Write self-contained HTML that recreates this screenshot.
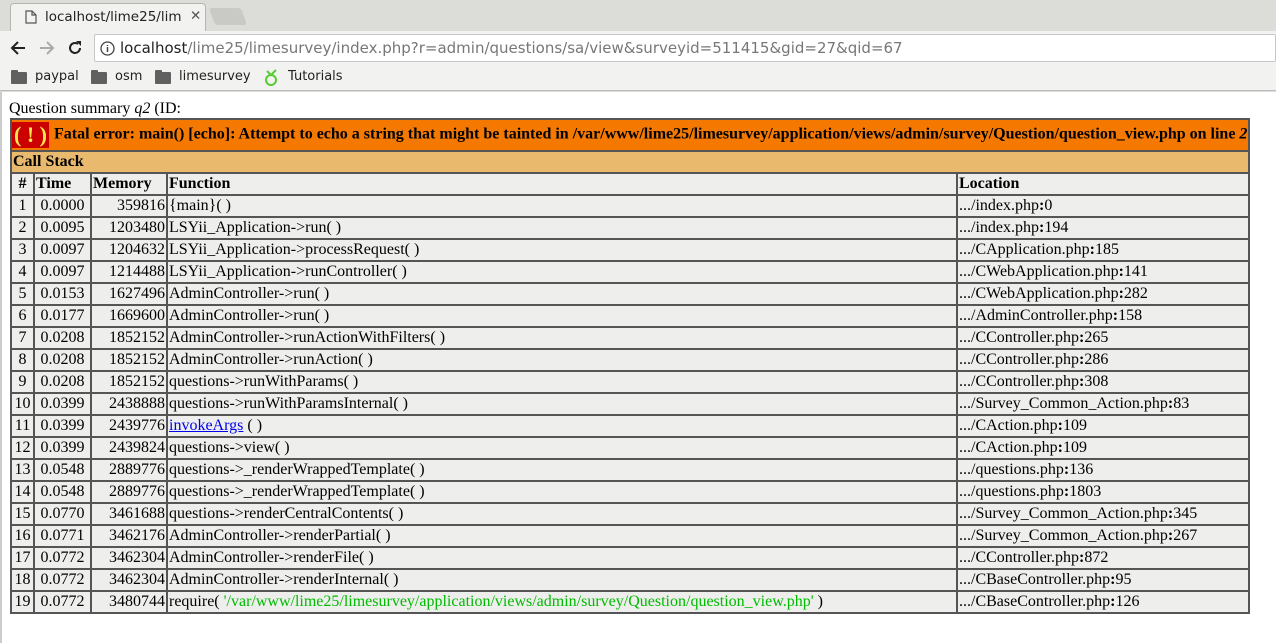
<!DOCTYPE html>
<html><head><meta charset="utf-8"><style>
*{box-sizing:border-box}
body{margin:0;width:1276px;height:643px;overflow:hidden;background:#fff;font-family:"Liberation Serif",serif;font-size:16px;position:relative}
.chrome{position:absolute;left:0;top:0;width:1276px;height:92px;background:#dcdcd9;font-family:"DejaVu Sans","Liberation Sans",sans-serif}
.tab{position:absolute;left:10px;top:3px;width:196px;height:28px;background:#f2f2f0;border:1px solid #b5b5b2;border-bottom:none;border-radius:4px 4px 0 0;font-size:13.5px;color:#222}
.tab2{position:absolute;left:212px;top:8px;width:32px;height:17px;background:#c9c9c6;border-radius:3px;transform:skewX(20deg)}
.toolbar{position:absolute;left:0;top:31px;width:1276px;height:34px;background:#f2f2f0}
.url{position:absolute;left:94px;top:34px;width:1182px;height:28px;background:#fff;border:1px solid #c8c8c8;border-radius:2px;font-size:15px;line-height:26px;padding-left:25px;color:#777}
.url b{font-weight:normal;color:#222}
.bm{position:absolute;top:65px;height:26px;background:#f2f2f0;width:1276px;left:0;border-bottom:1px solid #bbb}
.bm span{position:absolute;top:4px;font-size:13px;color:#222}
.folder{position:absolute;top:7px;width:16px;height:12px;background:#606060;border-radius:1px}
.folder:before{content:"";position:absolute;left:0;top:-2px;width:7px;height:3px;background:#606060;border-radius:1px 1px 0 0}
.content{position:absolute;left:0;top:92px;width:1276px;height:551px;border-left:2px solid #ccc}
table{position:absolute;left:10px;top:118px;border-collapse:collapse;width:1240px}
td,th{border:2px solid #555;padding:0 1px;height:22px;line-height:18px;background:#eeeeec;font-weight:normal;text-align:left;white-space:nowrap}
th{font-weight:bold}
.r{text-align:right}.c{text-align:center}
</style></head><body>
<div class="chrome">
 <div class="tab"><svg style="position:absolute;left:14px;top:6px" width="12" height="14"><path d="M1 1h6l4 4v8H1z M7 1v4h4" fill="none" stroke="#555" stroke-width="1.2"/></svg><span style="position:absolute;left:34px;top:5px">localhost/lime25/lim</span><span style="position:absolute;left:179px;top:4px;color:#555">✕</span></div>
 <div class="tab2"></div>
 <div class="toolbar">
  <svg style="position:absolute;left:10px;top:10px" width="16" height="14"><path d="M15 7H2M8 1L2 7l6 6" fill="none" stroke="#222" stroke-width="2"/></svg>
  <svg style="position:absolute;left:39px;top:10px" width="16" height="14"><path d="M1 7h13M8 1l6 6-6 6" fill="none" stroke="#aaa" stroke-width="2"/></svg>
  <svg style="position:absolute;left:66px;top:8px" width="18" height="18"><path d="M14 9a5 5 0 1 1-2-4" fill="none" stroke="#222" stroke-width="2"/><path d="M10 2h5v5z" fill="#222"/></svg>
 </div>
 <div class="url"><svg style="position:absolute;left:5px;top:6px" width="15" height="15"><circle cx="7.5" cy="7.5" r="6.5" fill="none" stroke="#444" stroke-width="1.3"/><path d="M7.5 6v5M7.5 4v1" stroke="#444" stroke-width="1.5"/></svg><b>localhost</b>/lime25/limesurvey/index.php?r=admin/questions/sa/view&amp;surveyid=511415&amp;gid=27&amp;qid=67</div>
 <div class="bm">
  <div class="folder" style="left:11px"></div><span style="left:35px">paypal</span>
  <div class="folder" style="left:91px"></div><span style="left:115px">osm</span>
  <div class="folder" style="left:155px"></div><span style="left:179px">limesurvey</span>
  <svg style="position:absolute;left:264px;top:4px" width="14" height="18"><circle cx="7" cy="11" r="5" fill="none" stroke="#5c3" stroke-width="2"/><path d="M3 2l4 4 5-5" fill="none" stroke="#5c3" stroke-width="2"/></svg><span style="left:288px">Tutorials</span>
 </div>
</div>
<div class="content"></div>
<div style="position:absolute;left:9px;top:100px;line-height:18px">Question summary <i>q2</i> (ID:</div>
<table>
<tr><th colspan="5" style="background:#f57900;height:32px;padding-left:0"><span style="display:inline-block;background:#cc0000;color:#fce94f;font-size:22px;padding:0 2px;line-height:26px;height:26px;vertical-align:middle;margin-right:1px">( ! )</span> Fatal error: main() [echo]: Attempt to echo a string that might be tainted in /var/www/lime25/limesurvey/application/views/admin/survey/Question/question_view.php on line <i>2</i></th></tr>
<tr><th colspan="5" style="background:#e9b96e">Call Stack</th></tr>
<tr><th class="c" style="width:23px">#</th><th style="width:57px">Time</th><th style="width:76px">Memory</th><th style="width:790px">Function</th><th>Location</th></tr>
<tr><td class="c">1</td><td class="c">0.0000</td><td class="r">359816</td><td>{main}(  )</td><td>.../index.php<b>:</b>0</td></tr>
<tr><td class="c">2</td><td class="c">0.0095</td><td class="r">1203480</td><td>LSYii_Application-&gt;run(  )</td><td>.../index.php<b>:</b>194</td></tr>
<tr><td class="c">3</td><td class="c">0.0097</td><td class="r">1204632</td><td>LSYii_Application-&gt;processRequest(  )</td><td>.../CApplication.php<b>:</b>185</td></tr>
<tr><td class="c">4</td><td class="c">0.0097</td><td class="r">1214488</td><td>LSYii_Application-&gt;runController(  )</td><td>.../CWebApplication.php<b>:</b>141</td></tr>
<tr><td class="c">5</td><td class="c">0.0153</td><td class="r">1627496</td><td>AdminController-&gt;run(  )</td><td>.../CWebApplication.php<b>:</b>282</td></tr>
<tr><td class="c">6</td><td class="c">0.0177</td><td class="r">1669600</td><td>AdminController-&gt;run(  )</td><td>.../AdminController.php<b>:</b>158</td></tr>
<tr><td class="c">7</td><td class="c">0.0208</td><td class="r">1852152</td><td>AdminController-&gt;runActionWithFilters(  )</td><td>.../CController.php<b>:</b>265</td></tr>
<tr><td class="c">8</td><td class="c">0.0208</td><td class="r">1852152</td><td>AdminController-&gt;runAction(  )</td><td>.../CController.php<b>:</b>286</td></tr>
<tr><td class="c">9</td><td class="c">0.0208</td><td class="r">1852152</td><td>questions-&gt;runWithParams(  )</td><td>.../CController.php<b>:</b>308</td></tr>
<tr><td class="c">10</td><td class="c">0.0399</td><td class="r">2438888</td><td>questions-&gt;runWithParamsInternal(  )</td><td>.../Survey_Common_Action.php<b>:</b>83</td></tr>
<tr><td class="c">11</td><td class="c">0.0399</td><td class="r">2439776</td><td><a href="#" style="color:#00e">invokeArgs</a> (  )</td><td>.../CAction.php<b>:</b>109</td></tr>
<tr><td class="c">12</td><td class="c">0.0399</td><td class="r">2439824</td><td>questions-&gt;view(  )</td><td>.../CAction.php<b>:</b>109</td></tr>
<tr><td class="c">13</td><td class="c">0.0548</td><td class="r">2889776</td><td>questions-&gt;_renderWrappedTemplate(  )</td><td>.../questions.php<b>:</b>136</td></tr>
<tr><td class="c">14</td><td class="c">0.0548</td><td class="r">2889776</td><td>questions-&gt;_renderWrappedTemplate(  )</td><td>.../questions.php<b>:</b>1803</td></tr>
<tr><td class="c">15</td><td class="c">0.0770</td><td class="r">3461688</td><td>questions-&gt;renderCentralContents(  )</td><td>.../Survey_Common_Action.php<b>:</b>345</td></tr>
<tr><td class="c">16</td><td class="c">0.0771</td><td class="r">3462176</td><td>AdminController-&gt;renderPartial(  )</td><td>.../Survey_Common_Action.php<b>:</b>267</td></tr>
<tr><td class="c">17</td><td class="c">0.0772</td><td class="r">3462304</td><td>AdminController-&gt;renderFile(  )</td><td>.../CController.php<b>:</b>872</td></tr>
<tr><td class="c">18</td><td class="c">0.0772</td><td class="r">3462304</td><td>AdminController-&gt;renderInternal(  )</td><td>.../CBaseController.php<b>:</b>95</td></tr>
<tr><td class="c">19</td><td class="c">0.0772</td><td class="r">3480744</td><td>require( <span style="color:#00bb00">'/var/www/lime25/limesurvey/application/views/admin/survey/Question/question_view.php'</span> )</td><td>.../CBaseController.php<b>:</b>126</td></tr>
</table>
</body></html>
